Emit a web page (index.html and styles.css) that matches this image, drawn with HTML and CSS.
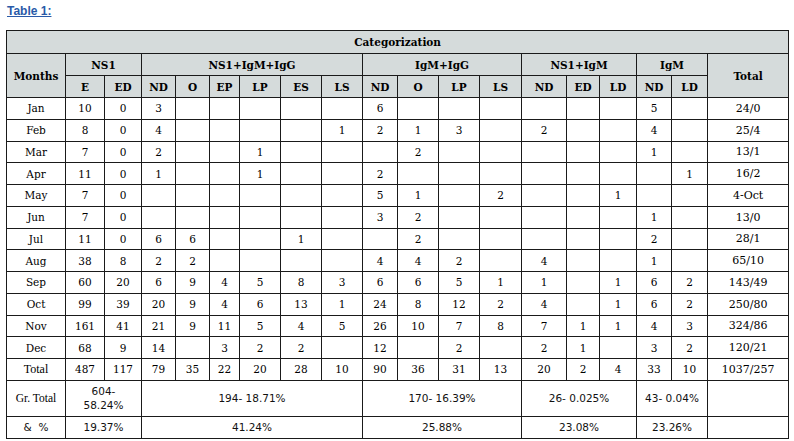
FILE: index.html
```html
<!DOCTYPE html>
<html>
<head>
<meta charset="utf-8">
<link rel="stylesheet" href="styles.css">
</head>
<body>
<div class="page">
  <h3 class="title"><span>Table 1:</span></h3>
  <table class="data">
    <colgroup>
      <col style="width:59px"><col style="width:39px"><col style="width:37px">
      <col style="width:34px"><col style="width:34px"><col style="width:30px"><col style="width:41px"><col style="width:41px"><col style="width:41px">
      <col style="width:35px"><col style="width:41px"><col style="width:41px"><col style="width:42px">
      <col style="width:45px"><col style="width:33px"><col style="width:37px">
      <col style="width:35px"><col style="width:36px">
      <col style="width:81px">
    </colgroup>
    <thead>
      <tr class="h1"><th colspan="19">Categorization</th></tr>
      <tr class="h2">
        <th rowspan="2">Months</th>
        <th colspan="2">NS1</th>
        <th colspan="6">NS1+IgM+IgG</th>
        <th colspan="4">IgM+IgG</th>
        <th colspan="3">NS1+IgM</th>
        <th colspan="2">IgM</th>
        <th rowspan="2">Total</th>
      </tr>
      <tr class="h3">
        <th>E</th><th>ED</th>
        <th>ND</th><th>O</th><th>EP</th><th>LP</th><th>ES</th><th>LS</th>
        <th>ND</th><th>O</th><th>LP</th><th>LS</th>
        <th>ND</th><th>ED</th><th>LD</th>
        <th>ND</th><th>LD</th>
      </tr>
    </thead>
    <tbody>
      <tr><td>Jan</td><td>10</td><td>0</td><td>3</td><td></td><td></td><td></td><td></td><td></td><td>6</td><td></td><td></td><td></td><td></td><td></td><td></td><td>5</td><td></td><td class="tot">24/0</td></tr>
      <tr><td>Feb</td><td>8</td><td>0</td><td>4</td><td></td><td></td><td></td><td></td><td>1</td><td>2</td><td>1</td><td>3</td><td></td><td>2</td><td></td><td></td><td>4</td><td></td><td class="tot">25/4</td></tr>
      <tr><td>Mar</td><td>7</td><td>0</td><td>2</td><td></td><td></td><td>1</td><td></td><td></td><td></td><td>2</td><td></td><td></td><td></td><td></td><td></td><td>1</td><td></td><td class="tot">13/1</td></tr>
      <tr><td>Apr</td><td>11</td><td>0</td><td>1</td><td></td><td></td><td>1</td><td></td><td></td><td>2</td><td></td><td></td><td></td><td></td><td></td><td></td><td></td><td>1</td><td class="tot">16/2</td></tr>
      <tr><td>May</td><td>7</td><td>0</td><td></td><td></td><td></td><td></td><td></td><td></td><td>5</td><td>1</td><td></td><td>2</td><td></td><td></td><td>1</td><td></td><td></td><td class="tot">4-Oct</td></tr>
      <tr><td>Jun</td><td>7</td><td>0</td><td></td><td></td><td></td><td></td><td></td><td></td><td>3</td><td>2</td><td></td><td></td><td></td><td></td><td></td><td>1</td><td></td><td class="tot">13/0</td></tr>
      <tr><td>Jul</td><td>11</td><td>0</td><td>6</td><td>6</td><td></td><td></td><td>1</td><td></td><td></td><td>2</td><td></td><td></td><td></td><td></td><td></td><td>2</td><td></td><td class="tot">28/1</td></tr>
      <tr><td>Aug</td><td>38</td><td>8</td><td>2</td><td>2</td><td></td><td></td><td></td><td></td><td>4</td><td>4</td><td>2</td><td></td><td>4</td><td></td><td></td><td>1</td><td></td><td class="tot">65/10</td></tr>
      <tr><td>Sep</td><td>60</td><td>20</td><td>6</td><td>9</td><td>4</td><td>5</td><td>8</td><td>3</td><td>6</td><td>6</td><td>5</td><td>1</td><td>1</td><td></td><td>1</td><td>6</td><td>2</td><td class="tot">143/49</td></tr>
      <tr><td>Oct</td><td>99</td><td>39</td><td>20</td><td>9</td><td>4</td><td>6</td><td>13</td><td>1</td><td>24</td><td>8</td><td>12</td><td>2</td><td>4</td><td></td><td>1</td><td>6</td><td>2</td><td class="tot">250/80</td></tr>
      <tr><td>Nov</td><td>161</td><td>41</td><td>21</td><td>9</td><td>11</td><td>5</td><td>4</td><td>5</td><td>26</td><td>10</td><td>7</td><td>8</td><td>7</td><td>1</td><td>1</td><td>4</td><td>3</td><td class="tot">324/86</td></tr>
      <tr><td>Dec</td><td>68</td><td>9</td><td>14</td><td></td><td>3</td><td>2</td><td>2</td><td></td><td>12</td><td></td><td>2</td><td></td><td>2</td><td>1</td><td></td><td>3</td><td>2</td><td class="tot">120/21</td></tr>
      <tr class="sum"><td class="lbl">Total</td><td>487</td><td>117</td><td>79</td><td>35</td><td>22</td><td>20</td><td>28</td><td>10</td><td>90</td><td>36</td><td>31</td><td>13</td><td>20</td><td>2</td><td>4</td><td>33</td><td>10</td><td class="tot">1037/257</td></tr>
      <tr class="gr"><td class="lbl">Gr. Total</td><td colspan="2" class="pct">604-<br>58.24%</td><td colspan="6" class="pct">194- 18.71%</td><td colspan="4" class="pct">170- 16.39%</td><td colspan="3" class="pct">26- 0.025%</td><td colspan="2" class="pct">43- 0.04%</td><td></td></tr>
      <tr class="pr"><td class="pct">&amp;&nbsp; %</td><td colspan="2" class="pct">19.37%</td><td colspan="6" class="pct">41.24%</td><td colspan="4" class="pct">25.88%</td><td colspan="3" class="pct">23.08%</td><td colspan="2" class="pct">23.26%</td><td></td></tr>
    </tbody>
  </table>
</div>
</body>
</html>
```

FILE: styles.css
```css
html, body {
  margin: 0;
  padding: 0;
  background: #ffffff;
}
.page {
  padding: 4px 6px 0 6px;
}
.title {
  margin: 0 0 12px 1px;
  font-family: "Liberation Sans", Arial, sans-serif;
  font-size: 12px;
  line-height: 14px;
  font-weight: bold;
  color: #2a5aa8;
}
.title span {
  text-decoration: underline;
}
.data {
  border-collapse: collapse;
  table-layout: fixed;
  width: 782px;
  font-family: "DejaVu Serif", serif;
  font-size: 10.5px;
  color: #000;
  border: 1.5px solid #1a1a1a;
}
.data th, .data td {
  border: 1px solid #1a1a1a;
  padding: 0;
  text-align: center;
  vertical-align: middle;
  white-space: nowrap;
}
.data th {
  background: #d5dbdb;
  font-weight: bold;
  font-size: 10.5px;
}
.h1 th { height: 22px; }
.h2 th { height: 21px; }
.h3 th { height: 21px; }
.data tbody td { height: 20.75px; }
.data td.tot { font-size: 11px; }
.data tr.sum td.lbl {
  font-family: "Liberation Serif", "Times New Roman", serif;
  font-size: 12px;
}
.data tr.gr td { height: 35px; }
.data tr.gr td.lbl {
  font-family: "Liberation Serif", "Times New Roman", serif;
  font-size: 11.5px;
}
.data tr.pr td { height: 21px; }
.data td.pct {
  font-family: "DejaVu Sans", Verdana, sans-serif;
  font-size: 10.5px;
  line-height: 14px;
  color: #111;
}
```
